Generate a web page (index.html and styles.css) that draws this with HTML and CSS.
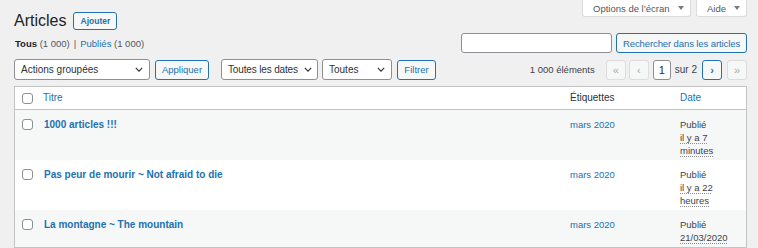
FILE: index.html
```html
<!DOCTYPE html>
<html lang="fr">
<head>
<meta charset="UTF-8">
<title>Articles</title>
<link rel="stylesheet" href="styles.css">
</head>
<body>
<div class="wrap">
    <div class="top-row">
        <div class="title-group">
            <h1>Articles</h1>
            <a class="title-action" href="#">Ajouter</a>
        </div>
        <div class="screen-meta-links">
            <button class="meta-tab meta-options">Options de l’écran <span class="caret"></span></button>
            <button class="meta-tab meta-help">Aide <span class="caret"></span></button>
        </div>
    </div>

    <div class="views-row">
        <ul class="subsubsub">
            <li class="current">Tous <span class="count">(1 000)</span></li>
            <li class="sep">|</li>
            <li><a href="#">Publiés</a> <span class="count">(1 000)</span></li>
        </ul>
        <div class="search-box">
            <input type="text" class="search-input">
            <button class="button">Rechercher dans les articles</button>
        </div>
    </div>

    <div class="tablenav">
        <div class="actions">
            <div class="select select-bulk"><span>Actions groupées</span><svg class="chevron" viewBox="0 0 10 6"><path d="M1 1l4 4 4-4"/></svg></div>
            <button class="button btn-apply">Appliquer</button>
            <div class="select select-dates"><span>Toutes les dates</span><svg class="chevron" viewBox="0 0 10 6"><path d="M1 1l4 4 4-4"/></svg></div>
            <div class="select select-cats"><span>Toutes</span><svg class="chevron" viewBox="0 0 10 6"><path d="M1 1l4 4 4-4"/></svg></div>
            <button class="button btn-filter">Filtrer</button>
        </div>
        <div class="pagination">
            <span class="num-items">1 000 éléments</span>
            <span class="page-btn disabled">«</span>
            <span class="page-btn disabled">‹</span>
            <span class="current-page">1</span>
            <span class="total-pages">sur 2</span>
            <a class="page-btn next" href="#">›</a>
            <span class="page-btn disabled last">»</span>
        </div>
    </div>

    <table class="list-table">
        <colgroup>
            <col class="col-cb">
            <col>
            <col class="col-tags">
            <col class="col-date">
        </colgroup>
        <thead>
            <tr>
                <th class="cb"><span class="checkbox"></span></th>
                <th><a href="#">Titre</a></th>
                <th>Étiquettes</th>
                <th><a href="#">Date</a></th>
            </tr>
        </thead>
        <tbody>
            <tr class="alt">
                <td class="cb"><span class="checkbox"></span></td>
                <td><a class="row-title" href="#">1000 articles !!!</a></td>
                <td><a href="#">mars 2020</a></td>
                <td>Publié<br><abbr>il y a 7 minutes</abbr></td>
            </tr>
            <tr>
                <td class="cb"><span class="checkbox"></span></td>
                <td><a class="row-title" href="#">Pas peur de mourir ~ Not afraid to die</a></td>
                <td><a href="#">mars 2020</a></td>
                <td>Publié<br><abbr>il y a 22 heures</abbr></td>
            </tr>
            <tr class="alt">
                <td class="cb"><span class="checkbox"></span></td>
                <td><a class="row-title" href="#">La montagne ~ The mountain</a></td>
                <td><a href="#">mars 2020</a></td>
                <td>Publié<br><abbr>21/03/2020</abbr></td>
            </tr>
        </tbody>
    </table>
</div>
</body>
</html>
```

FILE: styles.css
```css
body {
    margin: 0;
    background-color: #f0f0f1;
    font-family: "Liberation Sans", Arial, sans-serif;
    font-size: 9.5px;
    color: #3c434a;
}

a {
    color: #2271b1;
    text-decoration: none;
}

button {
    font-family: inherit;
}

.wrap {
    padding: 0 11px 0 14px;
}

/* header */
.top-row {
    display: flex;
    justify-content: space-between;
    height: 33px;
}

.title-group {
    display: flex;
    align-items: center;
    margin-top: 12px;
    height: 18px;
}

h1 {
    margin: 0;
    font-size: 16px;
    font-weight: normal;
    color: #1d2327;
    line-height: 18px;
}

.title-action {
    margin-left: 7px;
    width: 44px;
    height: 18px;
    box-sizing: border-box;
    border: 1px solid #2271b1;
    border-radius: 3px;
    background-color: #f6f7f7;
    font-size: 8.5px;
    font-weight: bold;
    line-height: 16px;
    text-align: center;
}

.screen-meta-links {
    display: flex;
    gap: 5px;
    align-items: flex-start;
}

.meta-tab {
    height: 17px;
    box-sizing: border-box;
    padding: 0 0 0 10px;
    border: 1px solid #dcdcde;
    border-top: none;
    border-radius: 0 0 3px 3px;
    background-color: #ffffff;
    color: #50575e;
    font-size: 9.5px;
    display: flex;
    align-items: center;
    gap: 8px;
}

.meta-options {
    width: 109px;
}

.meta-help {
    width: 51px;
}

.caret {
    width: 0;
    height: 0;
    border-left: 3px solid transparent;
    border-right: 3px solid transparent;
    border-top: 4px solid #787c82;
}

/* views + search */
.views-row {
    display: flex;
    justify-content: space-between;
    align-items: center;
    height: 20px;
}

.subsubsub {
    list-style: none;
    margin: 0;
    padding: 0 0 0 1px;
    display: flex;
    gap: 4px;
    color: #50575e;
}

.subsubsub .current {
    color: #1d2327;
    font-weight: bold;
}

.subsubsub .current .count {
    font-weight: normal;
    color: #50575e;
}

.search-box {
    display: flex;
    gap: 4px;
}

.search-input {
    width: 151px;
    height: 20px;
    box-sizing: border-box;
    border: 1px solid #8c8f94;
    border-radius: 3px;
    background-color: #ffffff;
    margin: 0;
}

.button {
    height: 20px;
    box-sizing: border-box;
    padding: 0;
    border: 1px solid #2271b1;
    border-radius: 3px;
    background-color: #f6f7f7;
    color: #2271b1;
    font-size: 9.5px;
    margin: 0;
}

.search-box .button {
    width: 131px;
    letter-spacing: -0.1px;
}

/* tablenav */
.tablenav {
    display: flex;
    justify-content: space-between;
    align-items: center;
    margin-top: 6px;
    height: 21px;
}

.actions {
    display: flex;
    align-items: center;
}

.select {
    height: 21px;
    box-sizing: border-box;
    border: 1px solid #8c8f94;
    border-radius: 3px;
    background-color: #ffffff;
    color: #2c3338;
    display: flex;
    align-items: center;
    justify-content: space-between;
    padding: 0 6px;
    font-size: 10px;
    white-space: nowrap;
}

.chevron {
    width: 8px;
    height: 5px;
    fill: none;
    stroke: #2c3338;
    stroke-width: 1.4;
    flex-shrink: 0;
}

.select-bulk {
    width: 136px;
}

.btn-apply {
    width: 54px;
    margin-left: 5px;
}

.select-dates {
    width: 97px;
    margin-left: 12px;
    padding-right: 5px;
    letter-spacing: -0.15px;
}

.select-cats {
    width: 70px;
    margin-left: 4px;
}

.btn-filter {
    width: 39px;
    margin-left: 5px;
}

.pagination {
    display: flex;
    align-items: center;
    color: #3c434a;
    font-size: 9.5px;
}

.num-items {
    margin-right: 8px;
}

.page-btn {
    width: 20px;
    height: 20px;
    box-sizing: border-box;
    border: 1px solid #2271b1;
    border-radius: 3px;
    background-color: #f6f7f7;
    display: flex;
    align-items: center;
    justify-content: center;
    font-size: 11px;
    font-weight: bold;
    margin-left: 3px;
}

.page-btn.disabled {
    border-color: #dcdcde;
    color: #a7aaad;
    font-weight: normal;
}

.page-btn.next,
.page-btn.last {
    margin-left: 5px;
}

.current-page {
    width: 18px;
    height: 20px;
    box-sizing: border-box;
    border: 1px solid #8c8f94;
    border-radius: 3px;
    background-color: #ffffff;
    display: flex;
    align-items: center;
    justify-content: center;
    color: #2c3338;
    font-size: 11px;
    margin-left: 4px;
}

.total-pages {
    margin-left: 4px;
    font-size: 10px;
}

/* table */
.list-table {
    width: 100%;
    margin-top: 6px;
    border: 1px solid #c3c4c7;
    border-spacing: 0;
    table-layout: fixed;
    background-color: #ffffff;
    box-shadow: 0 1px 1px rgba(0, 0, 0, 0.04);
}

.col-cb {
    width: 20px;
}

.col-tags {
    width: 110px;
}

.col-date {
    width: 74px;
}

.list-table th {
    text-align: left;
    font-weight: normal;
    color: #2c3338;
    padding: 5px 8px;
    line-height: 12px;
    font-size: 10px;
    border-bottom: 1px solid #c3c4c7;
}

.list-table td {
    padding: 8px 8px 3px;
    line-height: 13px;
    vertical-align: top;
    font-size: 9.5px;
}

.list-table .cb {
    padding: 0 0 0 7px;
}

.list-table th.cb {
    padding-top: 1px;
}

.list-table td.cb {
    padding-top: 9px;
}

.checkbox {
    display: block;
    width: 11px;
    height: 11px;
    box-sizing: border-box;
    border: 1px solid #8c8f94;
    border-radius: 3px;
    background-color: #ffffff;
}

.list-table tr.alt td {
    background-color: #f6f7f7;
}

.row-title {
    font-weight: bold;
    font-size: 10px;
    padding-left: 1px;
}

abbr {
    text-decoration: underline dotted #8c8f94;
    text-underline-offset: 2px;
}
```
